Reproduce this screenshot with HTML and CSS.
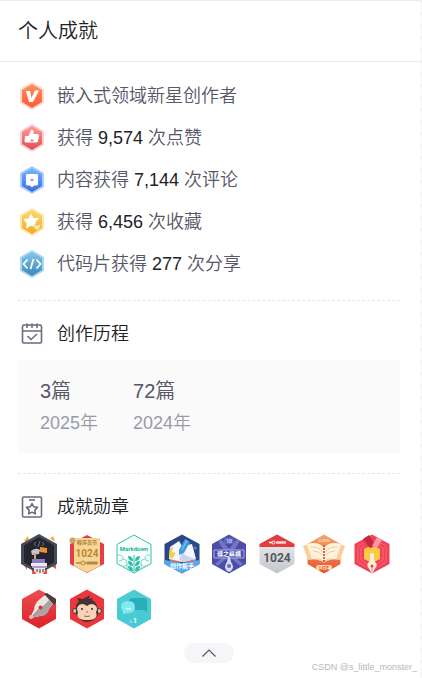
FILE: index.html
```html
<!DOCTYPE html>
<html lang="zh-CN">
<head>
    <meta charset="UTF-8">
    <meta name="viewport" content="width=device-width, initial-scale=1.0">
    <title>个人成就</title>
    <link rel="stylesheet" href="styles.css">
</head>
<body>

    <div class="card">
        <h3 class="card-title">个人成就</h3>

        <div class="card-body">
            <ul class="achievement-list">
                <li>
                    <svg class="icon" viewBox="0 0 28 28">
                        <defs><linearGradient id="gOrange" x2="0" y2="1"><stop stop-color="#ff9160"/><stop offset="1" stop-color="#ff5836"/></linearGradient></defs>
                        <path fill="#ffd9cf" d="M14 0 26 7v14l-12 7L2 21V7z"/>
                        <path fill="url(#gOrange)" d="M14 2 24 8v12l-10 6-10-6V8z"/>
                        <path fill="#fff" d="M8 9h4l1.500 7L17 8.500h4L15 20h-4z"/>
                    </svg>
                    <span>嵌入式领域新星创作者</span>
                </li>
                <li>
                    <svg class="icon" viewBox="0 0 28 28">
                        <defs><linearGradient id="gRed" x2="0" y2="1"><stop stop-color="#ff9a98"/><stop offset="1" stop-color="#e04e54"/></linearGradient></defs>
                        <path fill="#fbd0d0" d="M14 0 26 7v14l-12 7L2 21V7z"/>
                        <path fill="url(#gRed)" d="M14 2 24 8v12l-10 6-10-6V8z"/>
                        <path fill="#fff" d="M7 12h3.500L13 6q3-1 2.500 4h4q1.800 0 1.500 2l-1 5q-.5 1.500-2 1.500H8q-1.500 0-1.500-1.500z"/>
                        <path stroke="#e8696c" stroke-width="1.500" d="M12.500 16.500h3"/>
                    </svg>
                    <span>获得 <b>9,574</b> 次点赞</span>
                </li>
                <li>
                    <svg class="icon" viewBox="0 0 28 28">
                        <defs><linearGradient id="gBlue" x2="0" y2="1"><stop stop-color="#7ab7ff"/><stop offset="1" stop-color="#386be0"/></linearGradient></defs>
                        <path fill="#a9cdfb" d="M14 0 26 7v14l-12 7L2 21V7z"/>
                        <path fill="url(#gBlue)" d="M14 2 24 8v12l-10 6-10-6V8z"/>
                        <path fill="#fff" d="M9 8h10q1 0 1 1v9q0 1.500-1.500 1.500H16L14 21.500 12 19.500H9.500Q8 19.500 8 18V9q0-1 1-1z"/>
                        <path stroke="#4d84eb" stroke-width="1.500" d="M12.500 14h3"/>
                    </svg>
                    <span>内容获得 <b>7,144</b> 次评论</span>
                </li>
                <li>
                    <svg class="icon" viewBox="0 0 28 28">
                        <defs><linearGradient id="gGold" x2="0" y2="1"><stop stop-color="#ffd76b"/><stop offset="1" stop-color="#efad27"/></linearGradient></defs>
                        <path fill="#fde6ae" d="M14 0 26 7v14l-12 7L2 21V7z"/>
                        <path fill="url(#gGold)" d="M14 2 24 8v12l-10 6-10-6V8z"/>
                        <path fill="#fff" stroke="#fff" stroke-linejoin="round" d="m13 6.500 2.200 4 5.300-.3-3.500 4 .5 4.500-4.800-1.500-4 2.800.5-5-3.200-3.500 4.800-.8z"/>
                        <path fill="#fdeab8" stroke="#efb435" stroke-width=".6" d="M19 22.500q-4-2.500-3.500-5 1.500-2 3.500 0 2-2 3.500 0 .5 2.500-3.500 5z"/>
                    </svg>
                    <span>获得 <b>6,456</b> 次收藏</span>
                </li>
                <li>
                    <svg class="icon" viewBox="0 0 28 28">
                        <defs><linearGradient id="gSky" x2="0" y2="1"><stop stop-color="#83c9ea"/><stop offset="1" stop-color="#3c87b7"/></linearGradient></defs>
                        <path fill="#a8d8ef" d="M14 0 26 7v14l-12 7L2 21V7z"/>
                        <path fill="url(#gSky)" d="M14 2 24 8v12l-10 6-10-6V8z"/>
                        <path fill="none" stroke="#fff" stroke-width="1.800" d="m9.500 9.500-4 4.500 4 4.500m9-9 4 4.500-4 4.500M15.500 9l-3 10"/>
                    </svg>
                    <span>代码片获得 <b>277</b> 次分享</span>
                </li>
            </ul>

            <section class="block">
                <h4 class="block-title">
                    <svg class="icon" viewBox="0 0 28 28" fill="none" stroke="#6b6b7f" stroke-width="1.600">
                        <rect x="4.500" y="5" width="19" height="18" rx="1.500"/>
                        <path d="M4.500 11h19M9 3.500V8m5-4.500V8m5-4.500V8m-9.500 8 3.500 3.500 6-5.500"/>
                    </svg>
                    <span>创作历程</span>
                </h4>
                <ul class="history">
                    <li><span class="count">3篇</span><span class="year">2025年</span></li>
                    <li><span class="count">72篇</span><span class="year">2024年</span></li>
                </ul>
            </section>

            <section class="block">
                <h4 class="block-title">
                    <svg class="icon" viewBox="0 0 28 28" fill="none" stroke="#6b6b7f" stroke-width="1.600">
                        <rect x="4.500" y="4" width="19" height="20" rx="1.500"/>
                        <path d="M11 7h6"/>
                        <path stroke-linejoin="round" d="m14 10.500 1.700 3.300 3.800.6-2.700 2.700.6 3.700-3.400-1.700-3.400 1.700.6-3.700-2.700-2.700 3.800-.6z"/>
                    </svg>
                    <span>成就勋章</span>
                </h4>
                <div class="badges">
                    <!-- 锤子与书 -->
                    <svg class="badge" viewBox="0 0 42 42">
                        <path fill="#f5a53c" d="m6 8 4-5 1 6zM32 6l3-3 2 5z"/>
                        <path fill="#ee5145" d="M4 29h5v8zM33 33l5-3v6zM14 37h4v4h-4zM25 37h4v4h-4z"/>
                        <path fill="#464957" d="M21 1 39 11v20L21 41 3 31V11z"/>
                        <path fill="#24262f" d="M21 4 36 12.500v17L21 38 6 29.500v-17z"/>
                        <path fill="none" stroke="#686c7b" d="m18 9-2 2 2 2m6-4 2 2-2 2m-2-5-2 6"/>
                        <path fill="#f38b2d" d="m22 14 7 1v5l-7-1z"/>
                        <path fill="#bfc5d5" d="M13 18q5-4 9-1l-1 4-7 1z"/>
                        <path stroke="#d7a35d" stroke-width="2" d="M17 20v8"/>
                        <path fill="#8c7dc8" d="M14 26h13v4H14z"/>
                        <path fill="#f1e9ed" d="M13 30h16v3H13zM16 35h11v3l-3 3h-5l-3-3z"/>
                        <path fill="#b79abf" d="M14 33h15v2H14z"/>
                        <path stroke="#3b3545" d="M19 36v3m3-3v4m3-4v3"/>
                    </svg>
                    <!-- 1024 卷轴 -->
                    <svg class="badge" viewBox="0 0 42 42">
                        <path fill="#e93c49" d="M21 2 38 11v20L21 40 4 31V11z"/>
                        <path fill="#f5d793" d="M8 5h26v28L21 39.500 8 33z"/>
                        <circle cx="6.500" cy="7.500" r="3" fill="#c5a568"/>
                        <text class="scroll-top" x="21" y="11">程序员节</text>
                        <text class="scroll-num" x="21" y="24">1024</text>
                        <path stroke="#b9853f" stroke-width="1.500" d="M10 30h22"/>
                        <path stroke="#b9853f" stroke-width="3" d="M21 30h10"/>
                        <circle cx="17" cy="30" r="2" fill="#f5d793" stroke="#b9853f"/>
                    </svg>
                    <!-- Markdown -->
                    <svg class="badge" viewBox="0 0 42 42">
                        <path fill="#f8fffd" stroke="#31bfa9" d="M21 2 38 11.500v19L21 40 4 30.500v-19z"/>
                        <text class="markdown" x="21" y="18">Markdown</text>
                        <path stroke="#2cbfa6" d="M21 22v17"/>
                        <path fill="#2cbfa6" d="M20 28q-5 0-5-5 5 0 5 5zm2 0q5 0 5-5-5 0-5 5zM20 33q-5 0-5-5 5 0 5 5zm2 0q5 0 5-5-5 0-5 5zM20 38q-5 0-5-5 5 0 5 5zm2 0q5 0 5-5-5 0-5 5z"/>
                        <path fill="none" stroke="#7fd8c8" d="M5 22q5 0 5 3t-4 3m4-2q4 0 4 4t-5 3m5-2v5M37 22q-5 0-5 3t4 3m-4-2q-4 0-4 4t5 3m-5-2v5"/>
                    </svg>
                    <!-- 铅笔与书本 -->
                    <svg class="badge" viewBox="0 0 42 42">
                        <path fill="#2c4787" d="M21 1.500 38.500 11v20L21 40.500 3.500 31V11z"/>
                        <path fill="#e66e56" d="m9 25 12 3 14-2v3H9z"/>
                        <path fill="#f6f8ff" d="m9 14 9-6 3 5 10-2 4 15-13 3-14-3z"/>
                        <path fill="#c8d4ed" d="m21 20-3 6 4 3 13-3-7-2z"/>
                        <path fill="#f8cf4b" d="m9 15 3-1-1 5 4 1-4 6-3-2z"/>
                        <path fill="#429ae3" d="m18 17 6-11 5 3-6 11-5 2z"/>
                        <path stroke="#86cbf5" d="m21 17 5-10"/>
                        <path fill="#55a9ec" d="M3.500 27 21 30l17.500-3v4L21 40.500 3.500 31z"/>
                        <path stroke="#6d8bc8" d="M34 13v4m-2-2h4"/>
                        <text class="ribbon" x="21" y="35">创作能手</text>
                    </svg>
                    <!-- 博之纵横 -->
                    <svg class="badge" viewBox="0 0 42 42">
                        <path fill="#4c4da7" d="M21 1.500 38 11v20L21 40.500 4 31V11z"/>
                        <path fill="#7274c5" d="m10 8 11 17L32 8l-3-2-8 10-8-10zM7 31l10-9 2 3-9 8zM35 31l-10-9-2 3 9 8z"/>
                        <path fill="#6265bd" d="M16 4.500h10V11H16z"/>
                        <text class="vertical-num" x="21" y="10">10</text>
                        <path fill="#4c4da7" stroke="#aaaeea" d="M6 17h30v8H6z"/>
                        <path fill="#d5d9fa" d="M20 24h2l1 5q4 5 0 9l-2 1-2-1q-4-4 0-9z"/>
                        <circle cx="21" cy="33" r="2" fill="#6669bd"/>
                        <text class="banner" x="21" y="23">博之纵横</text>
                    </svg>
                    <!-- 1024 日历 -->
                    <svg class="badge" viewBox="0 0 42 42">
                        <defs><linearGradient id="gSilver" x2="0" y2="1"><stop stop-color="#eef0f3"/><stop offset="1" stop-color="#c3c6cb"/></linearGradient></defs>
                        <path fill="url(#gSilver)" d="M21 1.500 38.500 11v20L21 40.500 3.500 31V11z"/>
                        <path fill="#e33d3e" d="M21 1.500 38.500 11v3h-35v-3z"/>
                        <path stroke="#fff" stroke-width="1.500" d="M13 9.500h6"/>
                        <path stroke="#fbd7d5" stroke-width="2.500" d="M20 9.500h10"/>
                        <circle cx="17.500" cy="9.500" r="1.500" fill="#e33d3e" stroke="#fff"/>
                        <text class="calendar-num" x="21" y="29">1024</text>
                    </svg>
                    <!-- 翻开的书 -->
                    <svg class="badge" viewBox="0 0 42 42">
                        <defs><linearGradient id="gBook" x2="0" y2="1"><stop stop-color="#f4a36d"/><stop offset="1" stop-color="#e95131"/></linearGradient></defs>
                        <path fill="url(#gBook)" d="M21 1.500 37.500 11v20L21 40.500 4.500 31V11z"/>
                        <text class="book-top" x="21" y="9">CSDN</text>
                        <path fill="#f8cf9d" d="m0 13 5 14q10-2 16 3 6-5 16-3l5-14-5-2-6 14q-6 0-10 4-4-4-10-4L5 11z"/>
                        <path fill="#fff3dc" d="M4 11q12-3 17 4 5-7 17-4l-5 15q-8-2-12 3-4-5-12-3z"/>
                        <path fill="none" stroke="#f0c99e" d="M8 14q8-1 11 5M10 18q6 0 9 4m15-8q-8-1-11 5m9-1q-6 0-9 4"/>
                        <path stroke="#e36239" stroke-width="2" stroke-dasharray="2 1" d="M21 12v17"/>
                        <rect x="13" y="32" width="16" height="5" rx="2.500" fill="#ffdcae"/>
                        <text class="book-label" x="21" y="36.500">LIFE</text>
                    </svg>
                    <!-- 钢笔勋章 -->
                    <svg class="badge" viewBox="0 0 42 42">
                        <path fill="#f04358" d="M21 1.500 38.500 11v20L21 40.500 3.500 31V11z"/>
                        <path fill="none" stroke="#fa7884" stroke-width=".7" d="m12 10-5 3v16l14 8 14-8V13l-5-3M14 13l-4 2v12l11 7 11-7V15l-4-2"/>
                        <path fill="#fbc943" d="m13 16 4-2h8l4 2v10l-8 4-8-4z"/>
                        <path fill="#c62749" d="m12 6 6-4 7 11-6 2z"/>
                        <path fill="#ff98a0" d="m21 13 5-9 5 3-5 8z"/>
                        <path fill="#fff0db" d="M19 21h4v6l3 5-5 9-5-9 3-5z"/>
                        <circle cx="21" cy="22" r="2" fill="#fff0db"/>
                        <path stroke="#d98d7e" d="M21 34v5"/>
                        <circle cx="21" cy="33" r="1.500" fill="#df4456"/>
                    </svg>
                    <!-- 笔尖 -->
                    <svg class="badge" viewBox="0 0 42 42">
                        <defs><linearGradient id="gPen" x2="0" y2="1"><stop stop-color="#ee4d51"/><stop offset="1" stop-color="#dc2228"/></linearGradient></defs>
                        <path fill="url(#gPen)" d="M21 1.500 38 11v20L21 40.500 4 31V11z"/>
                        <path fill="#4e3b3b" d="m26 6 3-1 9 6v4l-3 2z"/>
                        <path fill="#ece7e5" d="m22 11 5-4 8 9-4 5q-2 7-9 7l-9 2q0-4 3-8 0-6 6-11z"/>
                        <path fill="#aaa3a3" d="m31 12 4 4-4 5q-2 7-9 7l-9 2 9-9z"/>
                        <path stroke="#756d70" d="m13 30 9-10"/>
                        <circle cx="22.500" cy="19.500" r="2" fill="#d93236"/>
                        <circle cx="13" cy="29" r="2" fill="#f1c7b8"/>
                    </svg>
                    <!-- 小猴子 -->
                    <svg class="badge" viewBox="0 0 42 42">
                        <path fill="#ed353e" d="M21 1.500 38 11v20L21 40.500 4 31V11z"/>
                        <circle cx="9" cy="23" r="2.500" fill="#eab49c" stroke="#523431"/>
                        <circle cx="33" cy="23" r="2.500" fill="#eab49c" stroke="#523431"/>
                        <path fill="#493332" d="M10 25V17l3-4-2-3 6 1 7-4-1 4 4-1-1 2q6 3 6 11v4q-4 7-11 7t-11-8z"/>
                        <path fill="#f7d2b8" d="M21 18q5-4 9 0 2 3 0 6 3 8-9 8t-9-8q-2-3 0-6 4-4 9 0z"/>
                        <circle cx="16" cy="21" r="1" fill="#3c292b"/>
                        <circle cx="26" cy="21" r="1" fill="#3c292b"/>
                        <path fill="none" stroke="#9c6257" d="M20 24h2m-4 4q3 1 6 0"/>
                    </svg>
                    <!-- 评论气泡 -->
                    <svg class="badge" viewBox="0 0 42 42">
                        <defs><linearGradient id="gTeal" x2="0" y2="1"><stop stop-color="#4ecbd1"/><stop offset="1" stop-color="#45cbd5"/></linearGradient></defs>
                        <path fill="url(#gTeal)" d="M21 1.500 38 11v20L21 40.500 4 31V11z"/>
                        <path fill="#28afb9" d="M20 10h11q3 0 3 3v11l-3-2H19q-3 0-3-3v-6q0-3 4-3z"/>
                        <path fill="#7eeaf0" d="M15 13q7 0 7 6t-7 6l-5 1v-3q-2-2-2-4 0-6 7-6z"/>
                        <path fill="none" stroke="#fff" stroke-width="1.200" d="M13 20q2.500 2 5 0"/>
                        <text class="level-mark" x="18" y="35">lv</text>
                        <text class="level" x="22" y="35">1</text>
                    </svg>
                </div>
            </section>

            <button class="fold" type="button" aria-label="收起">
                <svg viewBox="0 0 14 8" fill="none" stroke="#555666" stroke-width="1.200"><path d="M0.500 7.500 7 1l6.500 6.500"/></svg>
            </button>
        </div>
        <span class="watermark">CSDN @s_little_monster_</span>
    </div>

</body>
</html>
```
FILE: styles.css
```css
* {
    box-sizing: border-box;
}

body {
    margin: 0;
    font-family: "Liberation Sans", "Noto Sans CJK SC", sans-serif;
    color: #222226;
    background: repeating-linear-gradient(#f2f2f2 0 3px, #fafafa 3px 12px);
}

h3,
h4,
ul {
    margin: 0;
    padding: 0;
    font-weight: normal;
    list-style: none;
}

.card {
    position: relative;
    min-height: 100vh;
    margin-right: 2px;
    background: #fff;
    border-top: 1px solid #ebebeb;
}

.card-title {
    padding: 0 18px;
    font-size: 20px;
    line-height: 60px;
    font-weight: 350;
    border-bottom: 1px solid #ebebeb;
}

.card-body {
    padding: 20px 20px 0 18px;
}

.achievement-list {
    display: flex;
    flex-direction: column;
    gap: 14px;
    padding-bottom: 22px;
}

.achievement-list li,
.block-title {
    display: flex;
    align-items: center;
    gap: 11px;
    font-size: 18px;
    font-weight: 350;
    line-height: 28px;
}

.achievement-list li {
    color: #555666;
}

.achievement-list b {
    font-weight: normal;
    color: #222226;
}

.icon {
    flex: none;
    width: 28px;
    height: 28px;
}

.block {
    border-top: 1px dashed #e6e6e6;
    padding-top: 19px;
}

.history {
    display: flex;
    gap: 35px;
    margin: 12px 0 20px;
    padding: 15px 22px 14px;
    background: #fafafa;
}

.history span {
    display: block;
    font-weight: 350;
    line-height: 32px;
}

.history .count {
    font-size: 20px;
    color: #555666;
}

.history .year {
    font-size: 18px;
    color: #999aaa;
}

.badges {
    display: grid;
    grid-template-columns: repeat(8, 1fr);
    row-gap: 13px;
    padding: 12px 2px 0 0;
}

.badge {
    width: 42px;
    height: 42px;
}

.badge text {
    font-family: Roboto, "Noto Sans CJK SC", sans-serif;
    font-weight: bold;
    text-anchor: middle;
}

.badge .scroll-top {
    font-size: 5px;
    fill: #a7783b;
}

.badge .scroll-num {
    font-size: 10px;
    fill: #bc863c;
}

.badge .markdown {
    font-size: 6px;
    fill: #18b699;
}

.badge .ribbon,
.badge .banner {
    font-size: 6px;
    fill: #fff;
}

.badge .vertical-num {
    font-size: 5px;
    fill: #d5d9fa;
}

.badge .calendar-num {
    font-size: 12px;
    fill: #555861;
}

.badge .book-top {
    font-size: 4px;
    fill: #ffd8b0;
}

.badge .book-label {
    font-size: 5px;
    fill: #e26134;
}

.badge .level-mark {
    font-size: 4px;
    fill: #a5e9ec;
}

.badge .level {
    font-size: 8px;
    fill: #fff;
}

.fold {
    display: flex;
    align-items: center;
    justify-content: center;
    width: 50px;
    height: 20px;
    margin: 13px auto 0;
    padding: 0;
    border: 0;
    border-radius: 10px;
    background: #f5f6f7;
    cursor: pointer;
}

.fold svg {
    width: 14px;
    height: 8px;
}

.watermark {
    position: absolute;
    right: 3px;
    bottom: 5px;
    font-size: 9px;
    line-height: 12px;
    color: #b8b8b8;
}
```
